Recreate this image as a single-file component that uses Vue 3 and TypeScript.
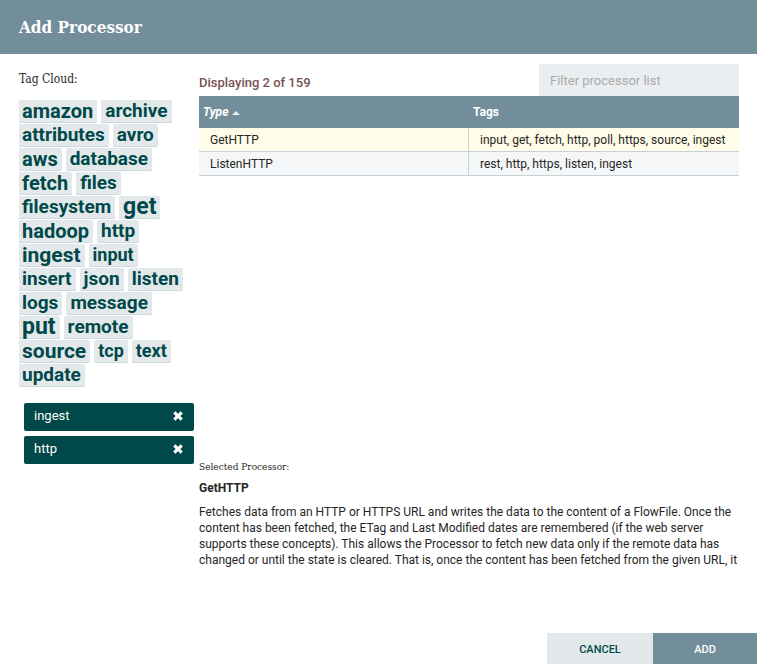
<script setup lang="ts">
import { computed, ref } from 'vue'

interface Tag {
  name: string
  size: number
}

interface Processor {
  type: string
  tags: string[]
  description: string
}

const total = 159

const cloud: Tag[] = [
  { name: 'amazon', size: 20 },
  { name: 'archive', size: 19 },
  { name: 'attributes', size: 19 },
  { name: 'avro', size: 19 },
  { name: 'aws', size: 20 },
  { name: 'database', size: 19 },
  { name: 'fetch', size: 20 },
  { name: 'files', size: 19 },
  { name: 'filesystem', size: 19 },
  { name: 'get', size: 23 },
  { name: 'hadoop', size: 20 },
  { name: 'http', size: 19 },
  { name: 'ingest', size: 21 },
  { name: 'input', size: 18 },
  { name: 'insert', size: 19 },
  { name: 'json', size: 19 },
  { name: 'listen', size: 19 },
  { name: 'logs', size: 19 },
  { name: 'message', size: 19 },
  { name: 'put', size: 23 },
  { name: 'remote', size: 19 },
  { name: 'source', size: 21 },
  { name: 'tcp', size: 18 },
  { name: 'text', size: 18 },
  { name: 'update', size: 19 },
]

const processors: Processor[] = [
  {
    type: 'GetHTTP',
    tags: ['input', 'get', 'fetch', 'http', 'poll', 'https', 'source', 'ingest'],
    description:
      'Fetches data from an HTTP or HTTPS URL and writes the data to the content of a FlowFile. Once the content has been fetched, the ETag and Last Modified dates are remembered (if the web server supports these concepts). This allows the Processor to fetch new data only if the remote data has changed or until the state is cleared. That is, once the content has been fetched from the given URL, it',
  },
  {
    type: 'ListenHTTP',
    tags: ['rest', 'http', 'https', 'listen', 'ingest'],
    description: '',
  },
]

const filters = ref<string[]>(['ingest', 'http'])
const query = ref('')
const selectedType = ref('GetHTTP')

const visible = computed(() =>
  processors.filter(
    (p) =>
      filters.value.every((f) => p.tags.includes(f)) &&
      p.type.toLowerCase().includes(query.value.toLowerCase()),
  ),
)
const selected = computed(() => visible.value.find((p) => p.type === selectedType.value))

function addFilter(name: string) {
  if (!filters.value.includes(name)) filters.value.push(name)
}

function removeFilter(name: string) {
  filters.value = filters.value.filter((f) => f !== name)
}
</script>

<template>
  <div class="dialog">
    <header class="title-bar">
      <h1>Add Processor</h1>
    </header>

    <main class="content">
      <aside class="sidebar">
        <h2 class="label">Tag Cloud:</h2>
        <div class="cloud-window">
          <ul class="cloud">
            <li v-for="tag in cloud" :key="tag.name">
              <button
                type="button"
                class="tag"
                :style="{ fontSize: tag.size + 'px' }"
                @click="addFilter(tag.name)"
              >{{ tag.name }}</button>
            </li>
          </ul>
        </div>
        <ul class="filters">
          <li v-for="name in filters" :key="name" class="filter">
            <span>{{ name }}</span>
            <button type="button" :aria-label="'Remove ' + name" @click="removeFilter(name)">
              <svg viewBox="0 0 10 10" width="10" height="10" aria-hidden="true">
                <path
                  d="M2.4 0.6 5 3.2 7.6 0.6 9.5 2.5 7 5 9.5 7.5 7.6 9.4 5 6.8 2.4 9.4 0.5 7.5 3 5 0.5 2.5Z"
                  fill="currentColor"
                  stroke="currentColor"
                  stroke-width="0.6"
                  stroke-linejoin="round"
                />
              </svg>
            </button>
          </li>
        </ul>
      </aside>

      <section class="results">
        <div class="toolbar">
          <p class="status">Displaying {{ visible.length }} of {{ total }}</p>
          <input
            v-model="query"
            class="search"
            type="text"
            aria-label="Filter processor list"
            placeholder="Filter processor list"
          />
        </div>

        <div class="table-area">
          <table>
            <thead>
              <tr>
                <th scope="col" class="sorted" aria-sort="ascending">
                  Type
                  <svg viewBox="0 0 8 4" width="8" height="4" aria-hidden="true">
                    <path d="M0 4 4 0 8 4Z" fill="#e6eef8" />
                  </svg>
                </th>
                <th scope="col">Tags</th>
              </tr>
            </thead>
            <tbody>
              <tr
                v-for="p in visible"
                :key="p.type"
                :class="{ selected: p.type === selectedType }"
                @click="selectedType = p.type"
              >
                <td>{{ p.type }}</td>
                <td>{{ p.tags.join(', ') }}</td>
              </tr>
            </tbody>
          </table>
        </div>

        <div v-if="selected" class="details">
          <h2 class="label small">Selected Processor:</h2>
          <h3>{{ selected.type }}</h3>
          <p>{{ selected.description }}</p>
        </div>
      </section>
    </main>

    <footer class="actions">
      <button type="button" class="cancel">CANCEL</button>
      <button type="button" class="add">ADD</button>
    </footer>
  </div>
</template>

<style>
body {
  margin: 0;
  background: #fff;
}
</style>

<style scoped>
* {
  box-sizing: border-box;
}

h1,
h2,
h3,
p,
ul {
  margin: 0;
  padding: 0;
}

ul {
  list-style: none;
}

button,
input {
  font-family: inherit;
  border: 0;
  border-radius: 0;
  margin: 0;
}

button {
  cursor: pointer;
}

.dialog {
  display: flex;
  flex-direction: column;
  min-height: 100vh;
  font-family: Roboto, "Liberation Sans", sans-serif;
  font-size: 12px;
  line-height: 16px;
  color: #262626;
}

.title-bar {
  padding: 15px 19px;
  background: #728e9b;
  color: #fff;
}

.title-bar h1 {
  font-family: "Roboto Slab", "DejaVu Serif Condensed", "DejaVu Serif", serif;
  font-size: 17px;
  line-height: 24px;
  font-weight: 700;
}

.content {
  flex: 1;
  display: flex;
  padding: 10px 18px 65px 19px;
}

.sidebar {
  flex: 0 0 180px;
  padding-top: 7px;
}

.label {
  font-family: "Roboto Slab", "DejaVu Serif Condensed", "DejaVu Serif", serif;
  font-size: 12px;
  line-height: 16px;
  font-weight: 400;
}

.label.small {
  font-size: 10px;
}

.cloud-window {
  margin-top: 13px;
  overflow: hidden;
}

.cloud {
  display: flex;
  flex-wrap: wrap;
  gap: 1px 4px;
  width: 170px;
  margin-left: -1px;
}

.tag {
  display: block;
  height: 23px;
  padding: 0 4px;
  background: #e3e8eb;
  border-bottom: 1px solid #ccdadb;
  border-radius: 2px;
  color: #004849;
  font-weight: 700;
  line-height: 22px;
}

.filters {
  display: grid;
  gap: 5px;
  margin: 16px 5px 0;
}

.filter {
  display: flex;
  align-items: center;
  justify-content: space-between;
  height: 28px;
  padding: 0 11px 2px 10px;
  background: #004849;
  border-radius: 2px;
  color: #fff;
  font-size: 13px;
}

.filter button {
  display: flex;
  padding: 0;
  background: none;
  color: inherit;
}

.results {
  flex: 1;
  min-width: 0;
  display: flex;
  flex-direction: column;
}

.toolbar {
  display: flex;
  justify-content: space-between;
  align-items: center;
}

.status {
  padding-top: 5px;
  color: #775351;
  font-size: 13px;
  font-weight: 500;
}

.search {
  width: 200px;
  height: 32px;
  padding: 0 11px;
  background: #eaeef0;
  color: #262626;
  font-size: 13px;
}

.search::placeholder {
  color: #aaa;
  opacity: 1;
}

.table-area {
  flex: 1;
}

table {
  width: 100%;
  table-layout: fixed;
  border-collapse: separate;
  border-spacing: 0;
}

th {
  height: 32px;
  padding: 0 4px;
  background: #728e9b;
  color: #fff;
  font-weight: 700;
  text-align: left;
}

th.sorted {
  font-style: italic;
}

th svg {
  margin-left: 1px;
  vertical-align: 1px;
}

td {
  height: 24px;
  padding: 0 11px;
  background: #f4f6f7;
  border-bottom: 1px solid #c7d2d7;
  white-space: nowrap;
}

td:first-child {
  border-right: 1px solid #c7d2d7;
}

tr.selected td {
  background: #fffce7;
}

.details h3 {
  margin-top: 5px;
  font-size: 12px;
  font-weight: 700;
}

.details p {
  height: 64px;
  margin-top: 8px;
  overflow: hidden;
}

.actions {
  display: flex;
  justify-content: flex-end;
}

.actions button {
  height: 31px;
  padding: 2px 0 0;
  font-size: 11px;
  font-weight: 500;
}

.actions .cancel {
  width: 106px;
  background: #e3e8eb;
  color: #004849;
}

.actions .add {
  width: 104px;
  background: #728e9b;
  color: #fff;
}
</style>
